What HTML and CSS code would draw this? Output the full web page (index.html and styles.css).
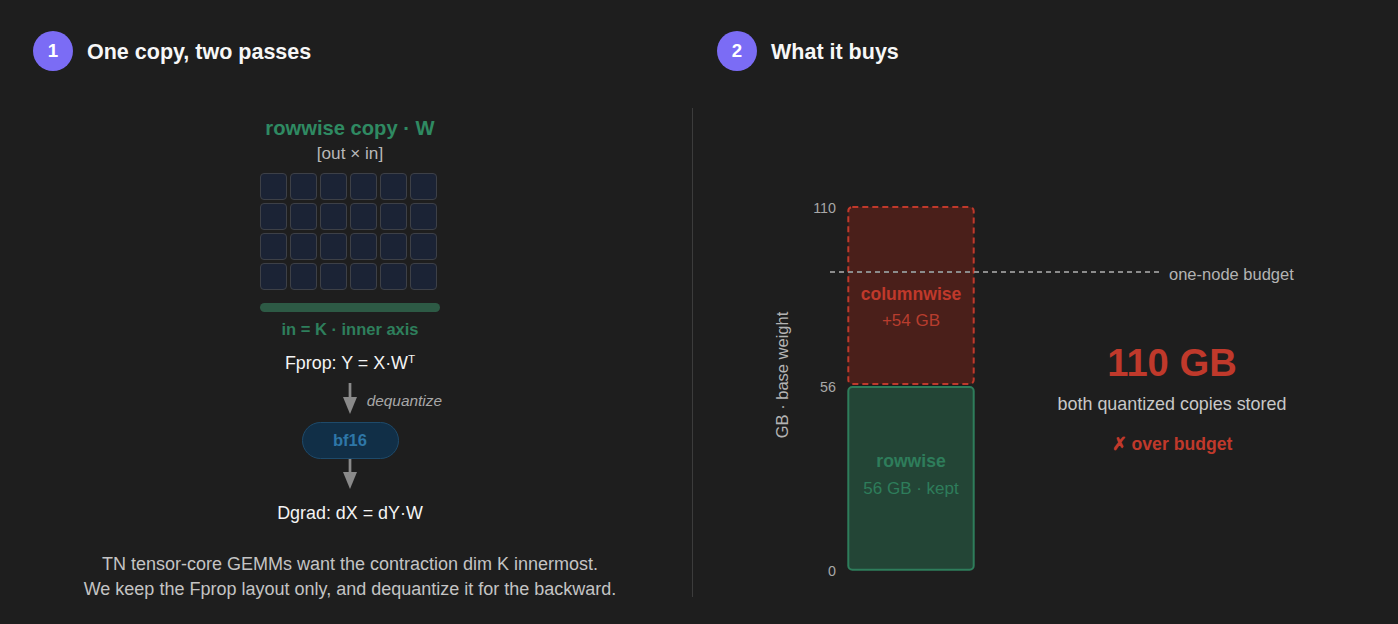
FILE: index.html
```html
<!DOCTYPE html>
<html lang="en">
<head>
<meta charset="utf-8">
<title>One copy, two passes</title>
<link rel="stylesheet" href="styles.css">
</head>
<body>
<div class="page">
  <header class="head head-left">
    <span class="num">1</span>
    <h2 class="title">One copy, two passes</h2>
  </header>
  <header class="head head-right">
    <span class="num">2</span>
    <h2 class="title">What it buys</h2>
  </header>

  <section class="left">
    <div class="copy-title">rowwise copy · W</div>
    <div class="dims">[out × in]</div>
    <div class="matrix">
      <div class="grid">
        <span class="cell"></span><span class="cell"></span><span class="cell"></span><span class="cell"></span><span class="cell"></span><span class="cell"></span>
        <span class="cell"></span><span class="cell"></span><span class="cell"></span><span class="cell"></span><span class="cell"></span><span class="cell"></span>
        <span class="cell"></span><span class="cell"></span><span class="cell"></span><span class="cell"></span><span class="cell"></span><span class="cell"></span>
        <span class="cell"></span><span class="cell"></span><span class="cell"></span><span class="cell"></span><span class="cell"></span><span class="cell"></span>
      </div>
      <div class="inner-bar"></div>
    </div>
    <div class="inner-label">in = K · inner axis</div>
    <div class="eq eq-fprop">Fprop: Y = X·W<sup>T</sup></div>
    <div class="arrow arrow-1">
      <svg width="16" height="31" viewBox="0 0 16 31"><rect x="6.65" y="0" width="2.7" height="15" fill="#8a8a8a"/><polygon points="1,14 15,14 8,31" fill="#8a8a8a"/></svg>
      <span class="arrow-label">dequantize</span>
    </div>
    <div class="pill">bf16</div>
    <div class="arrow arrow-2">
      <svg width="16" height="30" viewBox="0 0 16 30"><rect x="6.65" y="0" width="2.7" height="14" fill="#8a8a8a"/><polygon points="1,13 15,13 8,30" fill="#8a8a8a"/></svg>
    </div>
    <div class="eq eq-dgrad">Dgrad: dX = dY·W</div>
    <p class="note">TN tensor-core GEMMs want the contraction dim K innermost.<br>We keep the Fprop layout only, and dequantize it for the backward.</p>
  </section>

  <div class="divider"></div>

  <section class="right">
    <svg class="chart" width="280" height="489" viewBox="0 0 280 489">
      <text class="axis-title" transform="translate(28,267) rotate(-90)" text-anchor="middle">GB · base weight</text>
      <text class="tick" x="76" y="104.7" text-anchor="end">110</text>
      <text class="tick" x="76" y="283.7" text-anchor="end">56</text>
      <text class="tick" x="76" y="468" text-anchor="end">0</text>
      <rect x="88.3" y="279" width="125.4" height="182.7" rx="4" fill="#234536" stroke="#2e7d5b" stroke-width="2"/>
      <rect x="88.3" y="99" width="125.4" height="177" rx="4" fill="#4a1f1a" stroke="#c0392b" stroke-width="2" stroke-dasharray="6 4"/>
      <text class="bar-name red" x="151" y="192" text-anchor="middle">columnwise</text>
      <text class="bar-val red" x="151" y="217.7" text-anchor="middle">+54 GB</text>
      <text class="bar-name green" x="151" y="359.3" text-anchor="middle">rowwise</text>
      <text class="bar-val green" x="151" y="386" text-anchor="middle">56 GB · kept</text>
    </svg>
    <div class="summary">
      <div class="big">110 GB</div>
      <div class="sub">both quantized copies stored</div>
      <div class="verdict">✗ over budget</div>
    </div>
    <div class="budget">
      <span class="budget-line"></span>
      <span class="budget-label">one-node budget</span>
    </div>
  </section>
</div>
</body>
</html>
```

FILE: styles.css
```css
html, body {
  margin: 0;
  padding: 0;
  background: #1e1e1e;
}

body {
  font-family: "Liberation Sans", Arial, sans-serif;
  color: #f2f2f2;
  width: 1398px;
  height: 624px;
  overflow: hidden;
}

.page {
  display: grid;
  grid-template-columns: 684px 1px 1fr;
  grid-template-rows: 40px 489px;
  row-gap: 37px;
  padding: 31px 8px 0 8px;
}

.head {
  display: flex;
  align-items: center;
  gap: 14px;
  grid-row: 1;
}

.head-left {
  grid-column: 1;
  padding-left: 25px;
}

.head-right {
  grid-column: 3;
  padding-left: 24px;
}

.num {
  width: 40px;
  height: 40px;
  border-radius: 50%;
  background: #7b6cf5;
  color: #ffffff;
  font-weight: 700;
  font-size: 18.7px;
  display: flex;
  align-items: center;
  justify-content: center;
}

.title {
  margin: 2px 0 0 0;
  font-size: 21.5px;
  font-weight: 700;
  color: #f7f7f7;
}

/* left panel */
.left {
  grid-column: 1;
  grid-row: 2;
  display: flex;
  flex-direction: column;
  align-items: center;
}

.left > * {
  flex-shrink: 0;
}

.copy-title {
  margin-top: 8.4px;
  font-size: 20.2px;
  line-height: 24px;
  font-weight: 700;
  color: #2f8a62;
}

.dims {
  margin-top: 3px;
  font-size: 17.2px;
  line-height: 20px;
  color: #b8b8b8;
}

.matrix {
  width: 180px;
  margin-top: 10px;
}

.grid {
  display: grid;
  grid-template-columns: repeat(6, 27px);
  grid-auto-rows: 27px;
  gap: 3px;
}

.cell {
  box-sizing: border-box;
  background: #1b2335;
  border: 1.3px solid #3d4047;
  border-radius: 4px;
}

.inner-bar {
  margin-top: 12.4px;
  height: 9px;
  border-radius: 4.5px;
  background: #2d5a45;
}

.inner-label {
  margin-top: 7.6px;
  font-size: 16.5px;
  line-height: 20px;
  font-weight: 700;
  color: #2e7f5c;
}

.eq {
  font-size: 17.9px;
  line-height: 21px;
  color: #f4f4f4;
}

.eq sup {
  font-size: 0.65em;
  line-height: 0;
  vertical-align: 0.52em;
}

.eq-fprop {
  margin-top: 13.4px;
}

.arrow {
  position: relative;
  display: flex;
  width: 16px;
}

.arrow svg {
  display: block;
}

.arrow-1 {
  margin-top: 9.6px;
}

.arrow-label {
  position: absolute;
  left: calc(100% + 8.7px);
  top: 9px;
  white-space: nowrap;
  font-style: italic;
  font-size: 15.4px;
  line-height: 18px;
  color: #a8a8a8;
}

.pill {
  box-sizing: border-box;
  margin-top: 8px;
  width: 97px;
  height: 37px;
  border: 1.5px solid #1e4a6a;
  border-radius: 18.5px;
  background: #112f47;
  color: #2e77a8;
  font-weight: 700;
  font-size: 16.5px;
  display: flex;
  align-items: center;
  justify-content: center;
}

.eq-dgrad {
  margin-top: 13.4px;
}

.note {
  margin: 28px 0 0 0;
  font-size: 18px;
  line-height: 25px;
  color: #c4c4c4;
  text-align: center;
}

.divider {
  grid-column: 2;
  grid-row: 2;
  background: #3c3c3c;
}

/* right panel */
.right {
  grid-column: 3;
  grid-row: 2;
  position: relative;
  display: flex;
  align-items: flex-start;
}

.chart {
  display: block;
  margin-left: 67px;
  font-family: "Liberation Sans", Arial, sans-serif;
}

.axis-title {
  font-size: 16.5px;
  fill: #b4b4b4;
}

.tick {
  font-size: 14.3px;
  fill: #a8a8a8;
}

.bar-name {
  font-size: 17.6px;
  font-weight: 700;
}

.bar-val {
  font-size: 17px;
}

.red {
  fill: #c0392b;
}

.bar-val.red {
  fill: #b83d2e;
}

.green {
  fill: #2e7d5b;
}

.summary {
  width: 264px;
  margin-top: 232.6px;
  display: flex;
  flex-direction: column;
  align-items: center;
}

.big {
  font-size: 38.2px;
  line-height: 44.9px;
  font-weight: 700;
  color: #c0392b;
}

.sub {
  margin-top: 8.9px;
  font-size: 17.9px;
  line-height: 21px;
  color: #c8c8c8;
}

.verdict {
  margin-top: 18.5px;
  font-size: 17.6px;
  line-height: 21px;
  font-weight: 700;
  color: #c0392b;
}

.budget {
  position: absolute;
  left: 137px;
  top: 154px;
  display: flex;
  align-items: flex-start;
  gap: 9px;
}

.budget-line {
  display: block;
  width: 330px;
  height: 1.5px;
  margin-top: 9.25px;
  background: repeating-linear-gradient(90deg, #8c8c8c 0 5px, transparent 5px 9px);
}

.budget-label {
  padding-top: 1.6px;
  font-size: 16.5px;
  line-height: 20px;
  color: #b3b3b3;
  white-space: nowrap;
}
```
